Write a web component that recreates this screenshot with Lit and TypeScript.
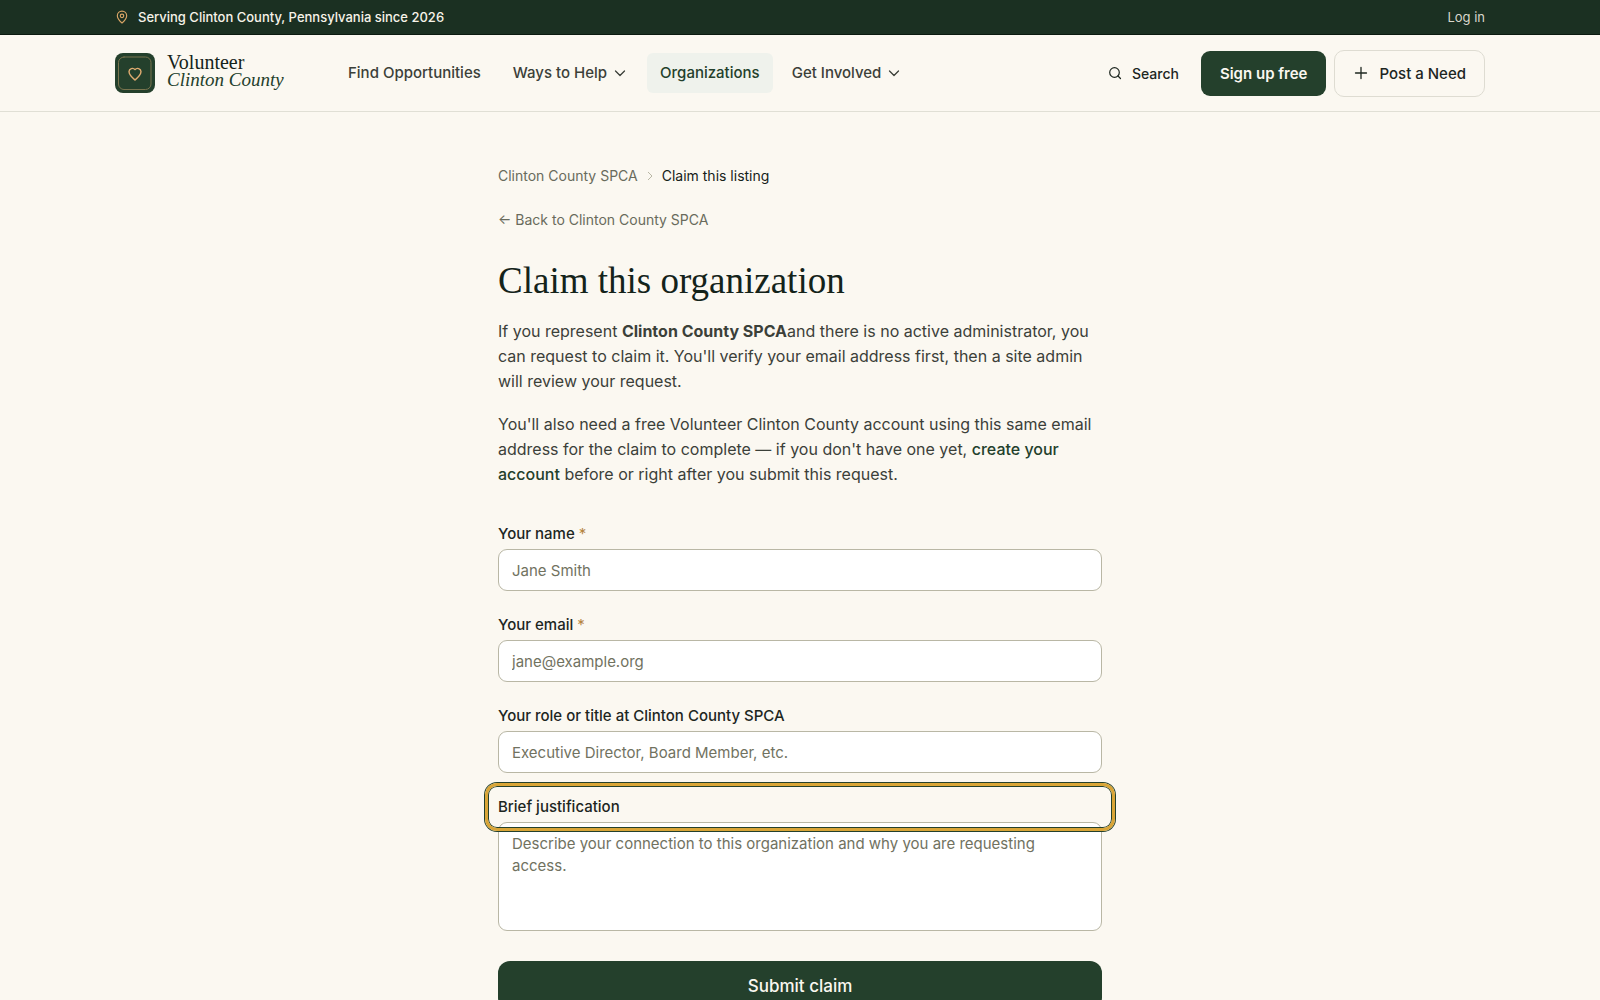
import { LitElement, html, css, svg } from "lit";
import { customElement } from "lit/decorators.js";

const chevronDown = svg`<path d="M3.5 6l4.5 4.5L12.5 6" />`;

@customElement("site-header")
class SiteHeader extends LitElement {
  static styles = css`
    :host { display: block; }
    * { box-sizing: border-box; }
    a { color: inherit; text-decoration: none; }
    svg { display: block; flex: none; fill: none; stroke: currentColor; stroke-linecap: round; stroke-linejoin: round; }
    .topbar { background: #1b3022; border-bottom: 1px solid #0b1a10; color: #f7f3e9; font-size: 13px; line-height: 18px; font-weight: 500; }
    .wrap { display: flex; align-items: center; max-width: 1418px; margin: 0 auto; padding: 0 24px; }
    .topbar .wrap { height: 34px; justify-content: space-between; }
    .place { display: flex; align-items: center; gap: 9px; }
    .pin { color: #d9a566; }
    .login { color: #d9d6cb; font-weight: 400; }
    .bar { border-bottom: 1px solid #e0dfd5; }
    .bar .wrap { height: 76px; }
    .brand { display: flex; align-items: center; gap: 12px; width: 220px; flex: none; }
    .words { display: grid; padding-bottom: 4px; font-family: "Liberation Serif", serif; font-size: 20px; line-height: 18px; color: #14231a; white-space: nowrap; }
    .words em { color: #24402c; font-size: 19px; }
    nav { display: flex; gap: 6px; flex: 1; }
    .item { display: flex; align-items: center; gap: 5px; padding: 8px 13px; border: 0; border-radius: 6px; background: none; color: #3b4039; font: inherit; font-size: 15px; line-height: 24px; font-weight: 500; white-space: nowrap; }
    .item.on { background: #eff2ec; color: #23402b; }
    .actions { display: flex; align-items: center; gap: 8px; color: #1d261f; font-weight: 500; white-space: nowrap; }
    .actions > * { display: flex; align-items: center; font: inherit; font-size: 15px; border: 0; background: none; color: inherit; }
    .actions .search { gap: 10px; padding: 0 14px; font-size: 14px; font-weight: 500; }
    .actions .signup { height: 45px; padding: 0 19px; border-radius: 9px; background: #24402c; color: #faf7f0; font-weight: 600; }
    .actions .post { height: 47px; gap: 10px; padding: 0 18px; border: 1px solid #dedcd2; border-radius: 10px; font-weight: 500; }
  `;
  render() {
    return html`
      <div class="topbar">
        <div class="wrap">
          <span class="place">
            <svg class="pin" width="14" height="14" viewBox="0 0 24 24" stroke-width="2"><path d="M20 10c0 5-5.500 10.200-7.400 11.800a1 1 0 0 1-1.200 0C9.500 20.200 4 15 4 10a8 8 0 0 1 16 0z" /><circle cx="12" cy="10" r="3" /></svg>
            Serving Clinton County, Pennsylvania since 2026
          </span>
          <a class="login" href="#login">Log in</a>
        </div>
      </div>
      <header class="bar">
        <div class="wrap">
          <a class="brand" href="#home">
            <svg width="40" height="40" viewBox="0 0 40 40">
              <rect width="40" height="40" rx="8" fill="#24402c" stroke="none" />
              <rect x="3.500" y="4" width="32.500" height="32.500" rx="5.500" stroke="#79744e" stroke-width="1" />
              <path d="M20 27c-2.400-2-6-4.900-6-8.400a3.400 3.400 0 0 1 6-2 3.400 3.400 0 0 1 6 2c0 3.500-3.600 6.400-6 8.400z" stroke="#dfab70" stroke-width="1.400" />
            </svg>
            <span class="words"><span>Volunteer</span><em>Clinton County</em></span>
          </a>
          <nav>
            <a class="item" href="#find">Find Opportunities</a>
            <button class="item">Ways to Help <svg width="16" height="16" viewBox="0 0 16 16" stroke-width="1.300">${chevronDown}</svg></button>
            <a class="item on" href="#organizations">Organizations</a>
            <button class="item">Get Involved <svg width="16" height="16" viewBox="0 0 16 16" stroke-width="1.300">${chevronDown}</svg></button>
          </nav>
          <div class="actions">
            <button class="search"><svg width="14" height="14" viewBox="0 0 14 14" stroke-width="1.200"><circle cx="6.500" cy="6.500" r="4.800" /><path d="M10 10l2.500 2.500" /></svg>Search</button>
            <a class="signup" href="#signup">Sign up free</a>
            <a class="post" href="#post"><svg width="16" height="16" viewBox="0 0 16 16" stroke-width="1.300"><path d="M8 2.500v11M2.500 8h11" /></svg>Post a Need</a>
          </div>
        </div>
      </header>
    `;
  }
}

@customElement("claim-form")
class ClaimForm extends LitElement {
  static styles = css`
    :host { display: block; }
    * { box-sizing: border-box; }
    form { display: grid; gap: 22px; }
    .field { display: grid; gap: 4px; position: relative; }
    label { font-size: 15px; line-height: 23px; font-weight: 500; color: #1d261f; }
    .req { color: #b5843f; font-weight: 400; }
    input, textarea { display: block; width: 100%; margin: 0; padding: 0 13px; border: 1px solid #b9b7a5; border-radius: 9px; background: #fff; color: #1d261f; font: inherit; font-size: 15px; line-height: 22px; outline: none; }
    input { height: 42px; }
    textarea { height: 109px; padding: 10px 13px; resize: none; }
    ::placeholder { color: #71725f; opacity: 1; }
    .ring { position: absolute; inset: -12px -13px auto; height: 48px; border: 3px solid #d9a537; border-radius: 12px; box-shadow: 0 0 0 1px #24402c, inset 0 0 0 1px #24402c; pointer-events: none; }
    .submit { height: 49px; margin-top: 8px; border: 0; border-radius: 12px; background: #24402c; color: #faf7f0; font: inherit; font-size: 17px; font-weight: 500; }
  `;
  render() {
    return html`
      <form @submit=${(e: Event) => e.preventDefault()}>
        <div class="field">
          <label for="name">Your name <span class="req">*</span></label>
          <input id="name" type="text" placeholder="Jane Smith" required />
        </div>
        <div class="field">
          <label for="email">Your email <span class="req">*</span></label>
          <input id="email" type="email" placeholder="jane@example.org" required />
        </div>
        <div class="field">
          <label for="role">Your role or title at Clinton County SPCA</label>
          <input id="role" type="text" placeholder="Executive Director, Board Member, etc." />
        </div>
        <div class="field">
          <label for="why">Brief justification</label>
          <textarea id="why" placeholder="Describe your connection to this organization and why you are requesting access."></textarea>
          <span class="ring"></span>
        </div>
        <button class="submit" type="submit">Submit claim</button>
      </form>
    `;
  }
}

@customElement("app-root")
class AppRoot extends LitElement {
  static styles = css`
    :host { display: block; min-height: 100vh; background: #fbf8f1; font-family: Inter, "Liberation Sans", sans-serif; }
    * { box-sizing: border-box; }
    a { color: inherit; text-decoration: none; }
    main { max-width: 652px; margin: 0 auto; padding: 54px 24px 64px; }
    .crumbs { display: flex; align-items: center; gap: 7px; font-size: 14px; line-height: 20px; color: #696b5c; }
    .crumbs svg { display: block; fill: none; stroke: #b9b7a5; }
    .here { color: #16221a; }
    .back { display: block; margin-top: 24px; font-size: 14px; line-height: 20px; color: #696b5c; }
    h1 { margin: 28px 0 0; font-family: "Liberation Serif", serif; font-weight: 400; font-size: 37px; line-height: 46px; color: #14231a; }
    p { margin: 15px 0 0; font-size: 16px; line-height: 25px; color: #3b4039; }
    p + p { margin-top: 18px; }
    .create { color: #23402b; font-weight: 500; }
    claim-form { margin-top: 35px; }
  `;
  render() {
    return html`
      <site-header></site-header>
      <main>
        <nav class="crumbs" aria-label="Breadcrumb">
          <a href="#spca">Clinton County SPCA</a>
          <svg width="10" height="12" viewBox="0 0 10 12"><path d="M3 2l4 4-4 4" /></svg>
          <span class="here">Claim this listing</span>
        </nav>
        <a class="back" href="#spca">← Back to Clinton County SPCA</a>
        <h1>Claim this organization</h1>
        <p>If you represent <strong>Clinton County SPCA</strong>and there is no active administrator, you can request to claim it. You'll verify your email address first, then a site admin will review your request.</p>
        <p>You'll also need a free Volunteer Clinton County account using this same email address for the claim to complete — if you don't have one yet, <a class="create" href="#account">create your account</a> before or right after you submit this request.</p>
        <claim-form></claim-form>
      </main>
    `;
  }
}
